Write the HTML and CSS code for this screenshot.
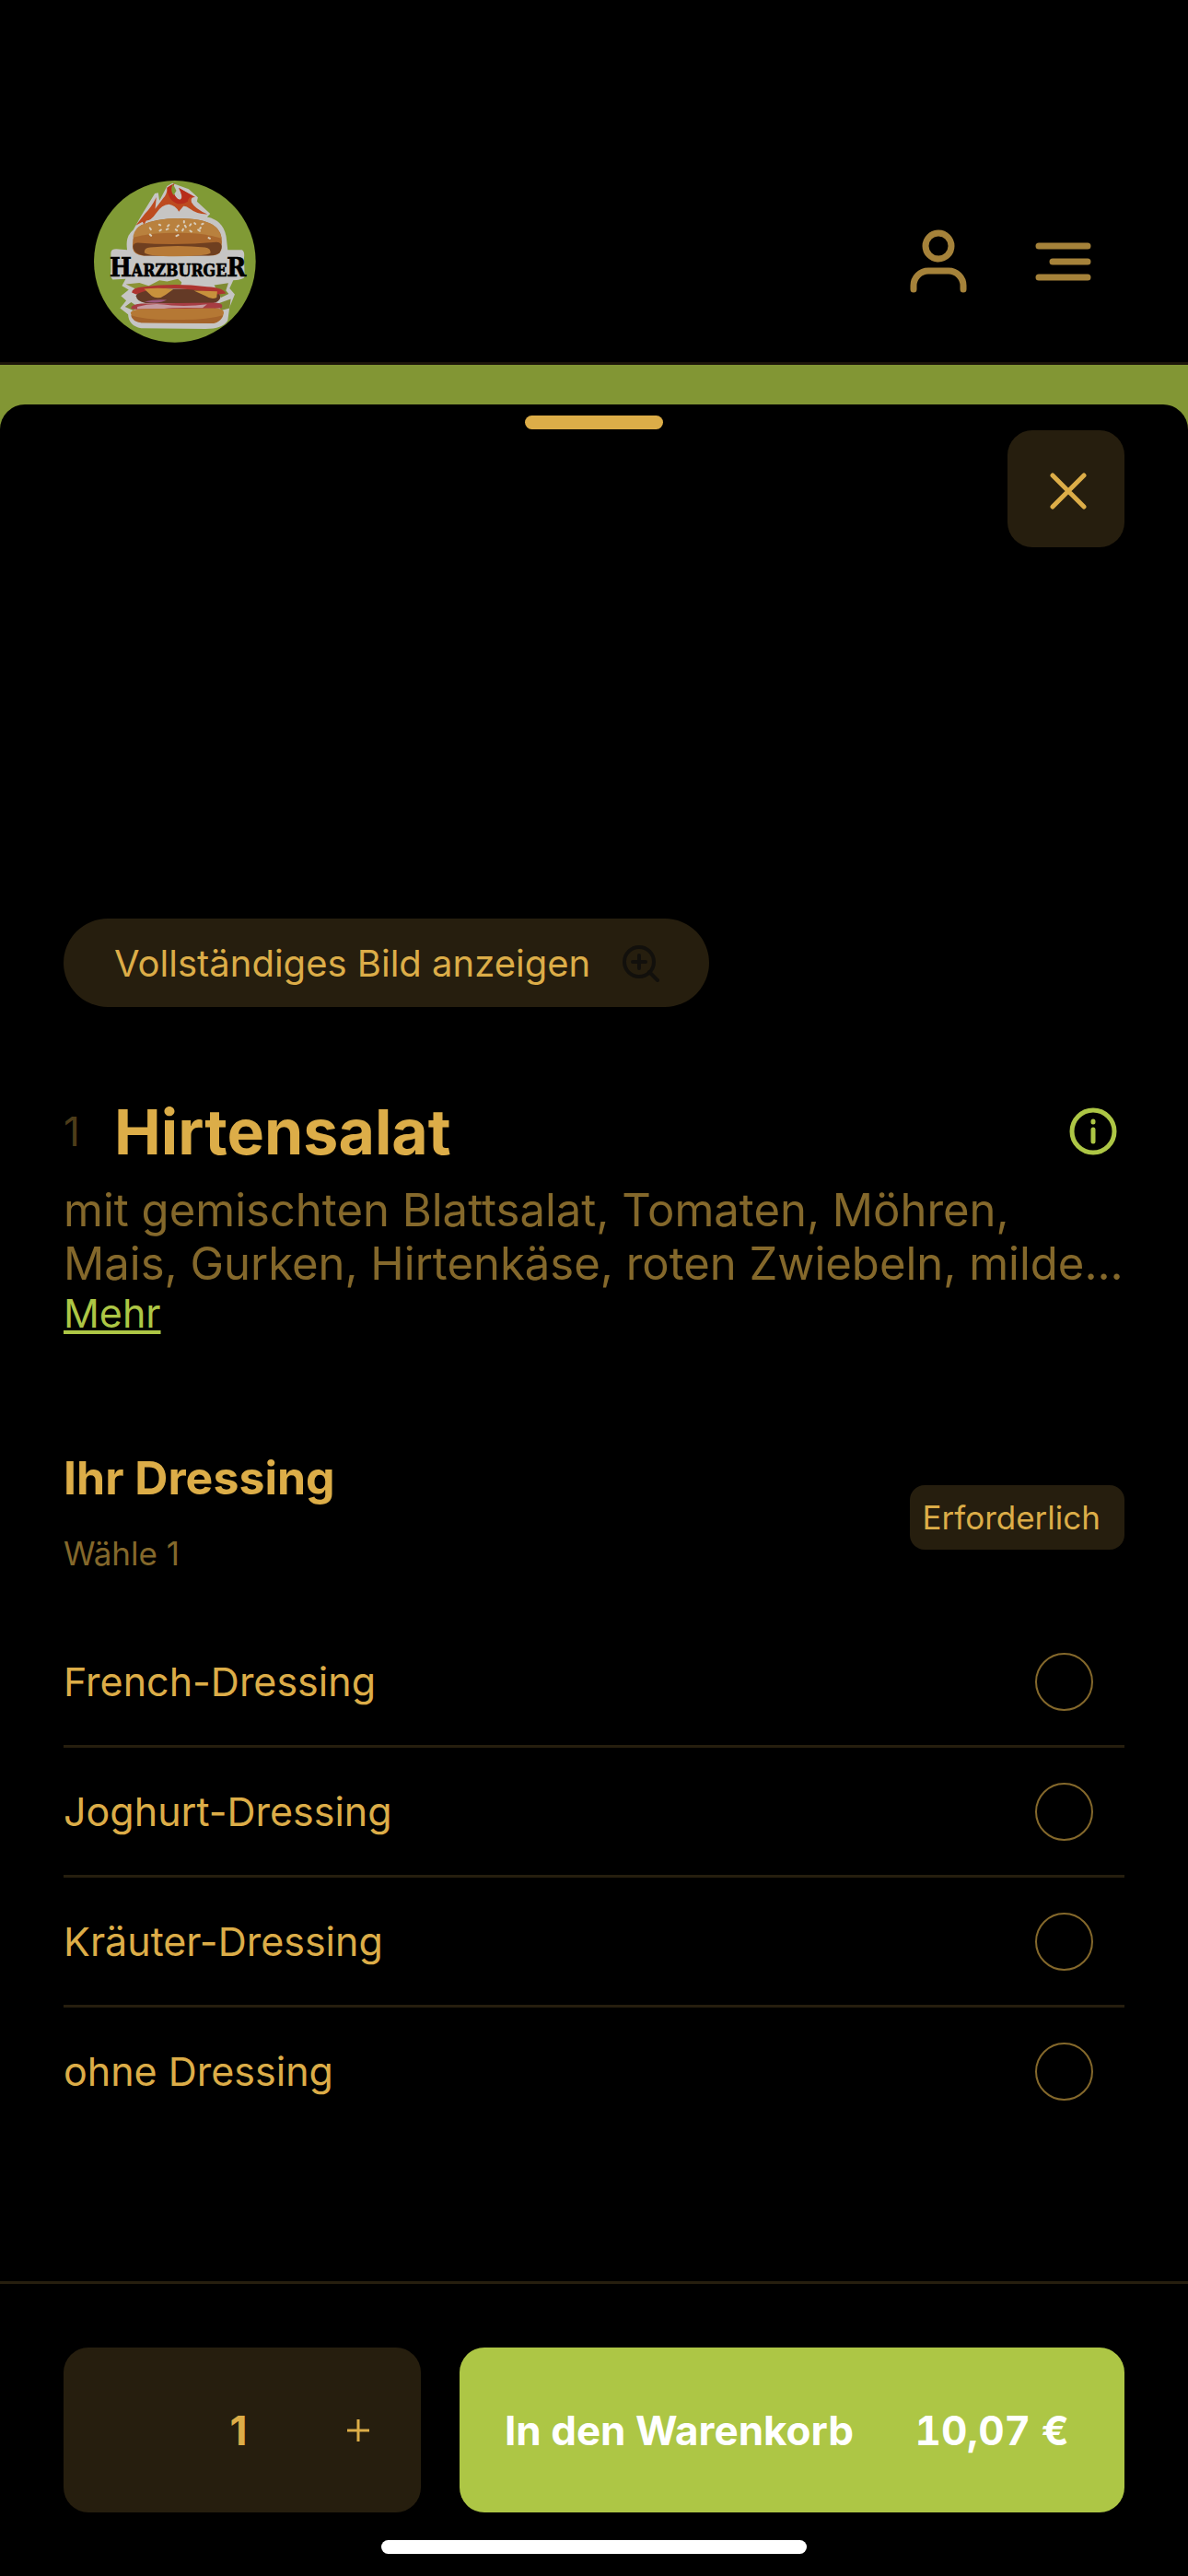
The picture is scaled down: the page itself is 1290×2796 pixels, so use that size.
FILE: index.html
```html
<!DOCTYPE html>
<html lang="de">
<head>
    <meta charset="UTF-8">
    <meta name="viewport" content="width=device-width, initial-scale=1.0">
    <title>Hirtensalat - Harzburger</title>
    <link rel="stylesheet" href="styles.css">
</head>
<body>
    <!-- Kopfzeile -->
    <header class="header">
        <a href="#" class="logo" aria-label="Harzburger">
            <svg viewBox="37 50 527 527">
                <circle cx="300" cy="313" r="263" fill="#809a35"/>
                <path d="M165 210 L190 165 L235 92 L246 90 L250 115 L275 68 L292 58 L312 66 L345 78 L375 105 L372 118 L415 158 L405 168 Q462 180 468 240 L472 275 L518 275 Q528 280 525 300 L527 362 Q525 372 490 374 L478 400 L495 420 L478 462 L472 505 Q455 532 400 532 L190 530 Q150 522 148 485 L122 465 L142 440 L125 425 L150 405 L128 392 L140 370 L98 372 Q88 365 92 345 L92 285 Q92 272 110 272 L145 275 Q138 230 165 210 Z" fill="#c6c5c4"/>
                <path d="M173 196 L204 156 Q222 140 240 104 Q238 128 236 142 L262 108 Q276 92 275 73 Q286 65 299 60 Q290 76 298 94 Q306 112 318 112 Q330 108 313 74 L366 104 Q350 104 354 120 Q366 142 406 159 Q372 160 351 143 Q337 132 328 133 L313 151 Q302 130 281 127 Q258 128 239 156 Q223 180 207 180 L200 193 L195 184 Z" fill="#bd4b20"/>
                <path d="M275 73 Q286 65 299 60 Q290 76 298 94 Q306 112 318 112 Q330 108 313 74 L366 104 Q345 98 342 118 Q315 135 291 115 Q276 100 275 73 Z" fill="#b72d1b"/>
                <path d="M294 61 Q283 81 296 98 L305 83 Z" fill="#809a35"/>
                <!-- Brötchen oben -->
                <path d="M163 270 Q160 215 190 195 Q235 174 310 173 Q390 173 425 195 Q453 212 453 250 L451 275 Q445 291 425 293 L195 294 Q167 290 163 270 Z" fill="#a9672d"/>
                <path d="M164 235 Q168 204 195 193 Q245 174 310 173 Q390 174 423 193 Q448 210 452 238 Q390 218 300 220 Q220 220 164 235 Z" fill="#b9813e"/>
                <path d="M164 264 Q166 252 180 252 Q300 262 436 250 Q454 250 452 270 L445 286 Q430 294 410 294 L200 294 Q165 288 164 264 Z" fill="#6f3f20"/>
                <path d="M201 284 Q200 268 220 267 Q310 258 398 267 Q418 270 416 286 Q400 296 300 296 Q215 296 201 284 Z" fill="#b77a37"/>
                <g stroke="#d8cdbb" stroke-width="6" stroke-linecap="round">
                    <path d="M219 204l3 5M219 225l4 4M249 193l4 2M251 213l4-3M281 194l-4 4M273 209l5-2M303 209l4 3M305 230l6-3M312 196l-4 4M330 182l0 4M333 196l3 5M327 208l-2 5M352 192l-3 4M350 213l4 3M364 188l3 3M376 210l5 4M392 190l-4 2M384 203l-2 3M410 236l4 2"/>
                </g>
                <!-- Belag -->
                <path d="M141 387 L185 382 L215 392 L250 374 L275 378 L310 370 L322 380 L318 397 L250 405 L175 403 Z" fill="#8c9335"/>
                <path d="M138 460 L158 445 L180 460 L165 472 Z M428 390 L474 383 L466 407 L475 418 L450 430 Z M440 450 L482 435 L478 465 L450 472 Z" fill="#7f8b33"/>
                <path d="M174 425 Q180 405 225 402 L400 402 Q448 408 448 430 Q445 444 425 448 L205 448 Q176 443 174 425 Z" fill="#643a26"/>
                <path d="M160 414 Q160 398 200 395 Q300 382 405 395 Q458 398 466 417 L440 420 Q350 398 262 400 Q210 402 174 420 Z" fill="#ad3430"/>
                <path d="M200 402 Q250 397 295 403 L270 421 Q246 439 225 425 Z M362 408 L438 410 L436 430 Q420 438 400 425 Z" fill="#c8913c"/>
                <path d="M158 467 Q155 453 190 450 L430 447 Q460 448 453 464 Q390 472 305 466 Q220 475 158 467 Z" fill="#a73c43"/>
                <path d="M178 460 Q230 445 290 456 Q350 460 405 452 L390 464 Q300 462 265 466 Q220 466 178 468 Z" fill="#c59aa0"/>
                <path d="M201 444 Q238 434 274 438 Q250 452 201 444 Z" fill="#9c587e"/>
                <!-- Brötchen unten -->
                <path d="M156 480 Q160 468 200 467 L425 465 Q462 465 459 482 Q455 508 425 514 L190 512 Q162 508 156 480 Z" fill="#b57834"/>
                <path d="M157 488 Q210 505 300 502 Q400 505 456 488 Q450 508 425 514 L190 512 Q162 508 157 488 Z" fill="#a4632a"/>
                <text x="310" y="360" text-anchor="middle" class="logo-text"><tspan class="logo-cap">H</tspan>ARZBURGE<tspan class="logo-cap">R</tspan></text>
            </svg>
        </a>
        <nav class="header-nav">
            <button type="button" class="icon-btn" aria-label="Konto">
                <svg viewBox="0 0 72 72"><circle cx="36" cy="19" r="14"/><path d="M9 66v-4a16 16 0 0 1 16-16h22a16 16 0 0 1 16 16v4"/></svg>
            </button>
            <button type="button" class="icon-btn" aria-label="Menü">
                <svg viewBox="0 0 72 72"><path d="M9 19h53M24 36h38M9 53h53"/></svg>
            </button>
        </nav>
    </header>

    <!-- Produktdetails -->
    <main class="backdrop">
        <section class="sheet">
            <div class="handle"></div>

            <div class="photo">
                <button type="button" class="close-btn" aria-label="Schließen">
                    <svg viewBox="0 0 40 40"><path d="M3 3l34 34M37 3L3 37"/></svg>
                </button>
                <button type="button" class="full-image-btn">
                    Vollständiges Bild anzeigen
                    <svg viewBox="0 0 40 40"><circle cx="18" cy="18" r="16"/><path d="M29 29l9 9M18 11v14M11 18h14"/></svg>
                </button>
            </div>

            <div class="title-row">
                <span class="number">1</span>
                <h1>Hirtensalat</h1>
                <button type="button" class="info-btn" aria-label="Produktinfo">
                    <svg viewBox="0 0 52 52"><circle cx="26" cy="26" r="23"/><path d="M26 24v13M26 15v1"/></svg>
                </button>
            </div>
            <p class="description">mit gemischten Blattsalat, Tomaten, Möhren,<br>Mais, Gurken, Hirtenkäse, roten Zwiebeln, milde...</p>
            <a href="#" class="more">Mehr</a>

            <!-- Auswahl Dressing -->
            <div class="group-head">
                <div class="group-title">
                    <h2 id="dressing">Ihr Dressing</h2>
                    <p>Wähle 1</p>
                </div>
                <span class="badge">Erforderlich</span>
            </div>
            <div class="options" role="radiogroup" aria-labelledby="dressing">
                <label class="option">French-Dressing <input type="radio" name="dressing"></label>
                <label class="option">Joghurt-Dressing <input type="radio" name="dressing"></label>
                <label class="option">Kräuter-Dressing <input type="radio" name="dressing"></label>
                <label class="option">ohne Dressing <input type="radio" name="dressing"></label>
            </div>
        </section>
    </main>

    <!-- Fußleiste -->
    <footer class="footer">
        <div class="actions">
            <div class="quantity">
                <button type="button" aria-label="Weniger" disabled></button>
                <input type="text" inputmode="numeric" value="1" aria-label="Anzahl">
                <button type="button" aria-label="Mehr">
                    <svg viewBox="0 0 26 26"><path d="M13 1v24M1 13h24"/></svg>
                </button>
            </div>
            <button type="button" class="cart-btn">
                <span>In den Warenkorb</span>
                <span class="price">10,07 €</span>
            </button>
        </div>
        <div class="home-bar"></div>
    </footer>
</body>
</html>
```
FILE: styles.css
```css
* {
    box-sizing: border-box;
}
body {
    margin: 0;
    min-height: 100vh;
    display: flex;
    flex-direction: column;
    background-color: #000;
    color: #dcad48;
    font-family: Inter, "Liberation Sans", sans-serif;
    font-size: 44px;
    line-height: 54px;
}
h1, h2, p {
    margin: 0;
}
button, input {
    margin: 0;
    padding: 0;
    border: none;
    background: none;
    color: inherit;
    font: inherit;
}
button {
    cursor: pointer;
}
svg {
    display: block;
    fill: none;
    stroke-linecap: round;
}

/* Kopfzeile */
.header {
    display: flex;
    justify-content: space-between;
    align-items: center;
    padding: 196px 99px 21px 102px;
    border-bottom: 3px solid #1c160a;
}
.logo svg {
    width: 176px;
    height: 176px;
}
.logo-text {
    font-family: "DejaVu Serif Condensed", "DejaVu Serif", serif;
    font-size: 53px;
    font-weight: bold;
    fill: #000;
    stroke: #000;
    stroke-width: 2;
}
.logo-cap {
    font-size: 84px;
}
.header-nav {
    display: flex;
    gap: 64px;
}
.icon-btn svg {
    width: 72px;
    height: 72px;
    stroke: #a5823a;
    stroke-width: 7;
}

/* Produktdetails */
.backdrop {
    flex: 1;
    padding-top: 43px;
    background: linear-gradient(#829634 100px, #000 100px);
}
.sheet {
    min-height: 100%;
    padding: 12px 69px 60px;
    border-radius: 27px 27px 0 0;
    background-color: #000;
}
.handle {
    width: 150px;
    height: 15px;
    margin: 0 auto 1px;
    border-radius: 8px;
    background-color: #dcad48;
}
.photo {
    display: flex;
    flex-direction: column;
    justify-content: space-between;
    align-items: flex-start;
    height: 626px;
}
.close-btn {
    display: flex;
    align-self: flex-end;
    align-items: center;
    justify-content: center;
    width: 127px;
    height: 127px;
    padding: 4px 0 0 4px;
    border-radius: 27px;
    background-color: #261e0e;
}
.close-btn svg {
    width: 40px;
    height: 40px;
    stroke: #dcad48;
    stroke-width: 5;
}
.full-image-btn {
    display: flex;
    align-items: center;
    gap: 35px;
    height: 96px;
    padding: 2px 54px 0 55px;
    border-radius: 48px;
    background-color: #261e0e;
    font-size: 40px;
}
.full-image-btn svg {
    width: 40px;
    height: 40px;
    stroke: #12100c;
    stroke-width: 4;
}
.title-row {
    display: flex;
    align-items: center;
    margin-top: 94px;
}
.number {
    width: 55px;
    color: #4d3c19;
}
h1 {
    flex: 1;
    font-size: 68px;
    line-height: 82px;
}
.info-btn {
    margin-right: 8px;
}
.info-btn svg {
    width: 52px;
    height: 52px;
    stroke: #adc645;
    stroke-width: 5;
}
.description {
    margin-top: 16px;
    color: #84682b;
    font-size: 49px;
    line-height: 58px;
}
.more {
    display: block;
    width: fit-content;
    color: #adc645;
    font-size: 43px;
    line-height: 48px;
}

/* Auswahl */
.group-head {
    display: flex;
    justify-content: space-between;
    align-items: center;
    margin: 125px 0 36px;
}
.group-title {
    padding-bottom: 12px;
}
h2 {
    font-size: 50px;
    line-height: 60px;
}
.group-title p {
    margin-top: 30px;
    color: #84682b;
    font-size: 35px;
    line-height: 44px;
}
.badge {
    padding: 13px 26px 13px 14px;
    border-radius: 16px;
    background-color: #261e0e;
    font-size: 35px;
    line-height: 44px;
}
.option {
    display: flex;
    justify-content: space-between;
    align-items: center;
    height: 141px;
    padding-right: 34px;
    border-bottom: 3px solid #261e0e;
    font-size: 43px;
}
.option:last-child {
    border-bottom-color: transparent;
}
.option input {
    appearance: none;
    width: 63px;
    height: 63px;
    border: 2px solid #84682b;
    border-radius: 50%;
}
.option input:checked {
    background-color: #dcad48;
}

/* Fußleiste */
.footer {
    padding: 69px 69px 24px;
    border-top: 3px solid #261e0e;
}
.actions {
    display: flex;
    gap: 42px;
}
.quantity {
    display: grid;
    grid-template-columns: 128px 124px 136px;
    height: 179px;
    border-radius: 27px;
    background-color: #261e0e;
}
.quantity button {
    display: flex;
    align-items: center;
    justify-content: center;
}
.quantity input {
    width: 100%;
    font-weight: 700;
    text-align: center;
}
.quantity svg {
    width: 26px;
    height: 26px;
    stroke: #dcad48;
    stroke-width: 3;
    stroke-linecap: butt;
}
.cart-btn {
    display: flex;
    flex: 1;
    align-items: center;
    justify-content: space-between;
    padding: 0 60px 0 49px;
    border-radius: 27px;
    background-color: #adc645;
    color: #fff;
    font-weight: 700;
}
.price {
    font-variant-numeric: tabular-nums;
}
.home-bar {
    width: 462px;
    height: 15px;
    margin: 30px auto 0;
    border-radius: 8px;
    background-color: #fff;
}
```
